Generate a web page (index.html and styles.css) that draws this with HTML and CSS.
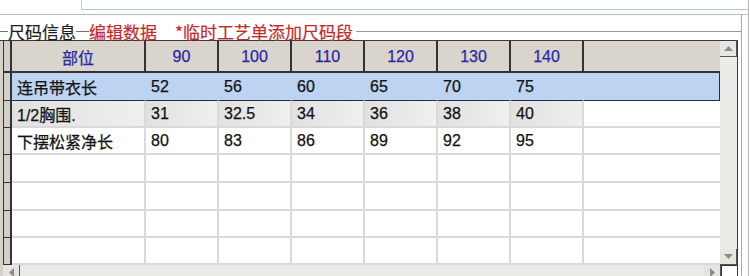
FILE: index.html
```html
<!DOCTYPE html>
<html lang="zh-CN">
<head>
<meta charset="utf-8">
<title>尺码信息</title>
<link rel="stylesheet" href="styles.css">
</head>
<body>
<div class="panel">
  <div class="top"><div class="inputbox"></div></div>
  <div class="group">
    <div class="legend">
      <span class="dash d1"></span>
      <span class="lt">尺码信息</span>
      <span class="dash d2"></span>
      <span class="lt red">编辑数据</span>
      <span class="lt red gap">*临时工艺单添加尺码段</span>
      <span class="dash d3"></span>
    </div>
    <div class="frame">
      <div class="body">
        <div class="sheet">
          <div class="rh hrh"></div>
          <div class="h">部位</div>
          <div class="h">90</div>
          <div class="h">100</div>
          <div class="h">110</div>
          <div class="h">120</div>
          <div class="h">130</div>
          <div class="h">140</div>
          <div class="h last"></div>

          <div class="rh"></div>
          <div class="c s">连吊带衣长</div>
          <div class="c s">52</div>
          <div class="c s">56</div>
          <div class="c s">60</div>
          <div class="c s">65</div>
          <div class="c s">70</div>
          <div class="c s">75</div>
          <div class="c s last"></div>

          <div class="rh"></div>
          <div class="c g">1/2胸围.</div>
          <div class="c g">31</div>
          <div class="c g">32.5</div>
          <div class="c g">34</div>
          <div class="c g">36</div>
          <div class="c g">38</div>
          <div class="c g">40</div>
          <div class="c last"></div>

          <div class="rh"></div>
          <div class="c">下摆松紧净长</div>
          <div class="c">80</div>
          <div class="c">83</div>
          <div class="c">86</div>
          <div class="c">89</div>
          <div class="c">92</div>
          <div class="c">95</div>
          <div class="c last"></div>

          <div class="rh"></div>
          <div class="c"></div><div class="c"></div><div class="c"></div><div class="c"></div>
          <div class="c"></div><div class="c"></div><div class="c"></div><div class="c last"></div>

          <div class="rh"></div>
          <div class="c"></div><div class="c"></div><div class="c"></div><div class="c"></div>
          <div class="c"></div><div class="c"></div><div class="c"></div><div class="c last"></div>

          <div class="rh"></div>
          <div class="c"></div><div class="c"></div><div class="c"></div><div class="c"></div>
          <div class="c"></div><div class="c"></div><div class="c"></div><div class="c last"></div>

          <div class="rh"></div>
          <div class="c"></div><div class="c"></div><div class="c"></div><div class="c"></div>
          <div class="c"></div><div class="c"></div><div class="c"></div><div class="c last"></div>
        </div>
        <div class="vscroll">
          <div class="btn"><svg width="9" height="5" viewBox="0 0 9 5"><path d="M0 5 L4.5 0 L9 5 Z" fill="#8a8a8a"/></svg></div>
          <div class="track"></div>
          <div class="btn"><svg width="9" height="5" viewBox="0 0 9 5"><path d="M0 0 L4.5 5 L9 0 Z" fill="#8a8a8a"/></svg></div>
        </div>
      </div>
      <div class="hscroll">
        <div class="hbtn"><svg width="5" height="9" viewBox="0 0 5 9"><path d="M5 0 L0 4.5 L5 9 Z" fill="#8a8a8a"/></svg></div>
        <div class="htrack"></div>
        <div class="hbtn"><svg width="5" height="9" viewBox="0 0 5 9"><path d="M0 0 L5 4.5 L0 9 Z" fill="#8a8a8a"/></svg></div>
        <div class="corner"></div>
      </div>
    </div>
  </div>
</div>
</body>
</html>
```
FILE: styles.css
```css
html, body {
  margin: 0;
  padding: 0;
  background: #ffffff;
  width: 750px;
  height: 276px;
  overflow: hidden;
  font-family: "Liberation Sans", "Noto Sans CJK SC", sans-serif;
}

.panel {
  width: 748px;
  height: 276px;
  overflow: hidden;
  border-right: 1px solid #b8b8b8;
}

.top {
  height: 15px;
  border-bottom: 1px solid #b9bcbc;
  box-sizing: border-box;
}

.inputbox {
  margin-left: 81px;
  height: 10px;
  border-left: 1px solid #c8cccc;
  border-bottom: 1px solid #a9cccc;
  box-sizing: border-box;
}

.group {
  width: 742px;
  height: 261px;
  overflow: hidden;
  border-right: 1px solid #a8a8a8;
  box-sizing: border-box;
}

.legend {
  display: flex;
  align-items: center;
  height: 25px;
  padding-top: 7px;
  box-sizing: border-box;
  margin-right: -1px;
}

.dash {
  display: block;
  flex-shrink: 0;
  height: 0;
  border-top: 1px solid #707070;
  margin-top: 1px;
}
.d1 { width: 8px; }
.d2 { width: 13px; }
.d3 { flex: 1; margin-left: 3px; border-top-color: #9a9a9a; }

.lt {
  flex-shrink: 0;
  font-family: "Noto Sans CJK SC", sans-serif;
  font-size: 17px;
  line-height: 19px;
  color: #1e1e1e;
  white-space: nowrap;
  -webkit-text-stroke: 0.2px currentColor;
}
.red { color: #c42a2c; }
.gap { margin-left: 18px; }

.frame {
  width: 738px;
  border-top: 1px solid #3a3a3a;
  border-right: 1px solid #3a3a3a;
  box-sizing: border-box;
  padding-left: 3px;
  background: #d6d2ca;
}

.body {
  display: flex;
}

.sheet {
  flex: 1;
  display: grid;
  grid-template-columns: 8px 134px repeat(6, 73px) 1fr;
  grid-template-rows: 32px 28px 27px 27px 28px 28px 27px 27px;
  border-left: 1px solid #333333;
  background: #ffffff;
}

.sheet > div {
  box-sizing: border-box;
  display: flex;
  align-items: center;
  font-size: 16px;
  white-space: nowrap;
  overflow: hidden;
  -webkit-text-stroke: 0.25px currentColor;
}

.rh {
  background: #d4d0c8;
  border-right: 2px solid #333333;
  border-bottom: 1px solid #333333;
}
.hrh {
  border-bottom: 2px solid #333333;
}

.h {
  background: #d9d5cd;
  color: #2828a4;
  justify-content: center;
  padding-top: 2px;
  border-right: 2px solid #333333;
  border-bottom: 2px solid #333333;
}
.h.last { border-right: none; }

.c {
  color: #121212;
  padding-left: 5px;
  border-right: 2px solid #d9d9d9;
  border-bottom: 2px solid #d9d9d9;
}
.c.last { border-right: none; }

.c.s {
  background: #bcd3f1;
  border-right-color: #bcd3f1;
  border-bottom: 1px solid #2c2c3c;
}
.c.s.last {
  border-right: 1px solid #2c2c3c;
}

.c.g {
  background: linear-gradient(to right, #e1e1e1, #efefef);
}

.vscroll {
  width: 17px;
  display: flex;
  flex-direction: column;
  background: #ecebe7;
}

.btn {
  height: 16px;
  display: flex;
  align-items: center;
  justify-content: center;
  background: #e8e6e0;
  border-right: 1px solid #555555;
  border-bottom: 1px solid #555555;
  box-sizing: border-box;
}

.track {
  flex: 1;
  background: #ecebe7;
}

.hscroll {
  display: flex;
  height: 11px;
  background: #ebeae6;
}

.hbtn {
  width: 17px;
  display: flex;
  align-items: flex-start;
  justify-content: center;
  padding-top: 3px;
  background: #e6e4de;
  border-right: 1px solid #555555;
  box-sizing: border-box;
}

.htrack {
  flex: 1;
  background: #ebeae6;
}

.corner {
  width: 16px;
  background: #ffffff;
  border-left: 1px solid #333333;
  border-top: 1px solid #333333;
  box-sizing: border-box;
}
```
